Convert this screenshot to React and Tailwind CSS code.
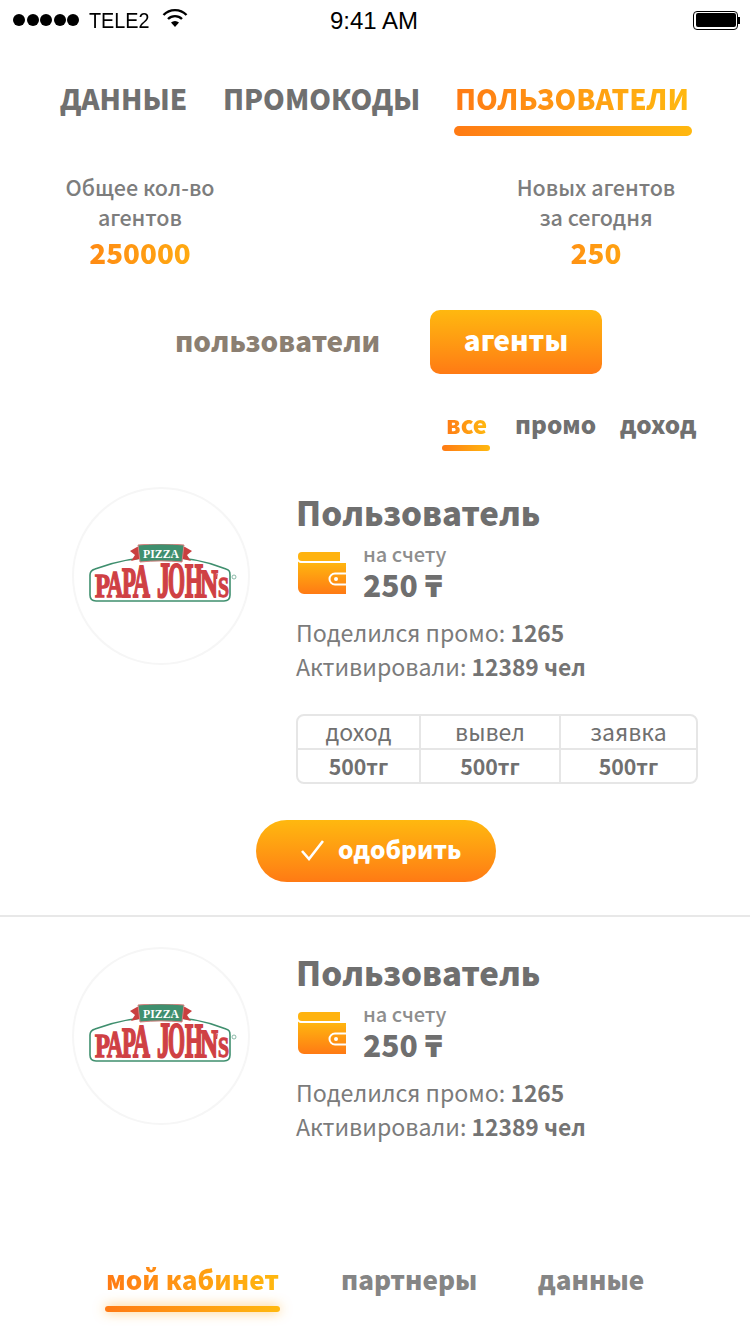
import React from "react";

function Grad({ children, className = "" }) {
  return (
    <span className={"bg-linear-to-r from-[#ff7a14] to-[#ffb80f] bg-clip-text text-transparent " + className}>
      {children}
    </span>
  );
}

function Bar({ className = "" }) {
  return <div className={"rounded-full bg-linear-to-r from-[#ff7a14] to-[#ffb80f] " + className} />;
}

const LETTERS = [
  ["P", 6, 15, 22, 0.611],
  ["A", 18, 16, 25, 0.722],
  ["P", 33, 14, 28, 0.611],
  ["A", 44, 17, 31, 0.722],
  ["J", 68, 13, 33, 0.5],
  ["O", 79, 17, 33, 0.778],
  ["H", 96, 18, 32, 0.778],
  ["N", 111, 18, 27, 0.722],
  ["S", 129, 11, 20, 0.556],
];

function Logo() {
  return (
    <svg width="150" height="60" viewBox="0 0 150 60" className="block">
      <path d="M1 31 C1 27 3 26 6 25 C30 16 50 13 72 13 C95 13 115 16 137 25 C140 26 141 27 141 31 L141 51 C141 55 139 57 135 57 L7 57 C3 57 1 55 1 51 Z" fill="#fff" stroke="#3f8f6e" strokeWidth="1.6" />
      <path d="M48 3 L41 7 L46 11 L42 17 L50 15 L94 15 L102 17 L98 11 L103 7 L96 3 Z" fill="#c9403f" />
      <path d="M49 1 C65 -0.5 79 -0.5 95 1 L93 18 C79 16.5 65 16.5 51 18 Z" fill="#3f8f6e" stroke="#d9807f" strokeWidth="1" />
      <text x="72" y="13.5" textAnchor="middle" fontFamily="'Liberation Serif', serif" fontWeight="700" fontSize="12" fill="#fff" textLength="36" lengthAdjust="spacingAndGlyphs">PIZZA</text>
      {LETTERS.map(([c, x, w, h, adv], i) => (
        <text
          key={i}
          transform={`translate(${x} 53) scale(${(w / (adv * 30)).toFixed(3)} ${(h / 19.8).toFixed(3)})`}
          fontFamily="'Liberation Serif', serif"
          fontWeight="700"
          fontSize="30"
          fill="#cf4044"
          stroke="#cf4044"
          strokeWidth="1.3"
        >
          {c}
        </text>
      ))}
      <path d="M128 30 L127.5 35" stroke="#cf4044" strokeWidth="1.4" />
      <circle cx="145" cy="33" r="2" fill="none" stroke="#6fa893" strokeWidth="0.8" />
    </svg>
  );
}

function Wallet() {
  return (
    <svg width="48" height="42" viewBox="0 0 48 42" className="block shrink-0 ml-[2px]">
      <defs>
        <linearGradient id="wg" x1="0" y1="0" x2="0" y2="1">
          <stop offset="0" stopColor="#ffb80f" />
          <stop offset="1" stopColor="#ff7a14" />
        </linearGradient>
      </defs>
      <path d="M4 0 H42 V9 H4 A4 4 0 0 1 0 5 V4 A4 4 0 0 1 4 0 Z" fill="#ffb30f" />
      <path d="M0 9.5 C1 10.5 2 11 4 11 H48 V42 H6 A6 6 0 0 1 0 36 Z" fill="url(#wg)" />
      <path d="M48 21.5 H37 A5.5 5.5 0 0 0 37 32.5 H48" fill="none" stroke="#fff" strokeWidth="2" />
      <circle cx="38" cy="27" r="2" fill="#fff" />
    </svg>
  );
}

function Card({ table }) {
  return (
    <div className="flex flex-col">
      <div className="flex pl-[72px]">
        <div className="w-[178px] h-[178px] rounded-full border-2 border-[#f6f6f6] flex items-center justify-center shrink-0">
          <div className="ml-[6px] mb-[4px]"><Logo /></div>
        </div>
        <div className="ml-[46px] flex flex-col">
          <div className="-mt-[2px] text-[33px] leading-[54px] font-black text-[#6f6f6f]">Пользователь</div>
          <div className="flex items-start mt-[13px]">
            <Wallet />
            <div className="ml-[17px] -mt-[11px] flex flex-col">
              <div className="text-[20px] leading-[26px] font-medium text-[#8e8e8e]">на счету</div>
              <div className="text-[30px] leading-[34px] font-black text-[#6f6f6f]">250 ₸</div>
            </div>
          </div>
          <div className="mt-[14px] text-[23.2px] leading-[34px] text-[#7b7b7b] whitespace-nowrap">
            <div>Поделился промо: <b className="font-bold text-[22.8px] leading-none text-[#747474]">1265</b></div>
            <div>Активировали: <b className="font-bold text-[22.8px] leading-none text-[#747474]">12389 чел</b></div>
          </div>
        </div>
      </div>
      {table && (
        <>
          <div className="ml-[296px] mt-[31px] w-[402px] h-[70px] border-2 border-[#e6e6e6] rounded-[8px] grid grid-cols-[123px_140px_1fr] grid-rows-[34px_1fr] text-center text-[#707070]">
            {["доход", "вывел", "заявка"].map((t, i) => (
              <div key={t} className={"text-[23px] leading-[31px] border-b-2 border-[#e6e6e6] " + (i < 2 ? "border-r-2" : "")}>{t}</div>
            ))}
            {[0, 1, 2].map((i) => (
              <div key={i} className={"text-[21.3px] leading-[32px] font-bold " + (i < 2 ? "border-r-2 border-[#e6e6e6]" : "")}>500тг</div>
            ))}
          </div>
          <div className="mt-[36px] ml-[256px] w-[240px] h-[62px] rounded-full bg-linear-to-b from-[#ffb80f] to-[#ff7a14] flex items-center pl-[44px] text-white">
            <svg width="24" height="22" viewBox="0 0 24 22" className="mr-[14px] -mt-[2px]">
              <path d="M2 12 L9 20 L23 2" fill="none" stroke="#fff" strokeWidth="2.6" />
            </svg>
            <span className="text-[24.3px] leading-[34px] font-black -mt-[4px]">одобрить</span>
          </div>
        </>
      )}
    </div>
  );
}

export default function App() {
  return (
    <div className="w-[750px] h-[1334px] bg-white overflow-hidden flex flex-col font-['Noto_Sans_CJK_SC','Noto_Sans',sans-serif]">
      <div className="h-[40px] relative flex items-center pl-[13px] pr-[10px] text-black font-['Liberation_Sans',sans-serif] text-[22px]">
        <div className="flex gap-[1.5px]">
          {[0, 1, 2, 3, 4].map((i) => <div key={i} className="w-[12px] h-[12px] rounded-full bg-black" />)}
        </div>
        <span className="ml-[10px] w-[61px] inline-block origin-left scale-x-90">TELE2</span>
        <svg width="26" height="20" viewBox="0 0 26 20" className="ml-[12px] -mt-[4px]">
          <path d="M1.5 7 A16 16 0 0 1 24.5 7" fill="none" stroke="#000" strokeWidth="2.4" />
          <path d="M6 11 A10 10 0 0 1 20 11" fill="none" stroke="#000" strokeWidth="2.4" />
          <path d="M13 19 L9 14.5 A6 6 0 0 1 17 14.5 Z" fill="#000" />
        </svg>
        <span className="absolute left-[330px] top-[6px] leading-[30px] text-[24px]">9:41 AM</span>
        <div className="ml-auto flex items-center">
          <div className="w-[45px] h-[19px] rounded-[4px] border border-black p-[1.5px]"><div className="w-full h-full bg-black rounded-[2px]" /></div>
          <div className="w-[2px] h-[7px] bg-black" />
        </div>
      </div>

      <div className="mt-[35px] pl-[60px] flex items-start text-[27.7px] leading-[46px] font-black text-[#707070] whitespace-nowrap">
        <div className="w-[163px]">ДАННЫЕ</div>
        <div className="w-[232px]">ПРОМОКОДЫ</div>
        <div className="flex flex-col items-start">
          <Grad>ПОЛЬЗОВАТЕЛИ</Grad>
          <Bar className="w-[238px] h-[10px] mt-[5px] -ml-[1px]" />
        </div>
      </div>

      <div className="mt-[36px] flex text-center">
        <div className="ml-[40px] w-[200px]">
          <div className="text-[21.5px] leading-[30px] font-medium text-[#7d7d7d]">Общее кол-во<br />агентов</div>
          <Grad className="block text-[27.8px] leading-[40px] font-black">250000</Grad>
        </div>
        <div className="ml-[256px] w-[200px]">
          <div className="text-[21.5px] leading-[30px] font-medium text-[#7d7d7d]">Новых агентов<br />за сегодня</div>
          <Grad className="block text-[27.8px] leading-[40px] font-black">250</Grad>
        </div>
      </div>

      <div className="mt-[38px] pl-[175px] flex items-center">
        <div className="w-[255px] -mt-[5px] text-[27.8px] leading-[44px] font-black text-[#8b7f72]">пользователи</div>
        <div className="w-[172px] h-[64px] rounded-[10px] bg-linear-to-b from-[#ffb80f] to-[#ff7a14] flex items-center justify-center text-[27.8px] font-black text-white pb-[5px]">агенты</div>
      </div>

      <div className="mt-[31px] pl-[442px] flex items-start text-[24.2px] leading-[38px] font-black text-[#707070]">
        <div className="w-[73px] flex flex-col items-start">
          <Grad className="ml-[4px]">все</Grad>
          <Bar className="w-[48px] h-[6px] mt-[2px]" />
        </div>
        <div className="w-[105px]">промо</div>
        <div>доход</div>
      </div>

      <div className="mt-[36px]">
        <Card table />
      </div>
      <div className="mt-[33px] h-[2px] bg-[#e8e8e8]" />
      <div className="mt-[30px]">
        <Card />
      </div>

      <div className="mt-auto pb-[22px] pl-[106px] flex items-start text-[26px] leading-[38px] font-black text-[#858585] whitespace-nowrap">
        <div className="w-[235px] flex flex-col items-start -mt-[2px]">
          <Grad>мой кабинет</Grad>
          <Bar className="w-[175px] h-[6px] mt-[8px] -ml-[1px] shadow-[0_0_12px_rgba(255,170,40,0.7)]" />
        </div>
        <div className="w-[197px] -mt-[2px]">партнеры</div>
        <div className="-mt-[2px]">данные</div>
      </div>
    </div>
  );
}
